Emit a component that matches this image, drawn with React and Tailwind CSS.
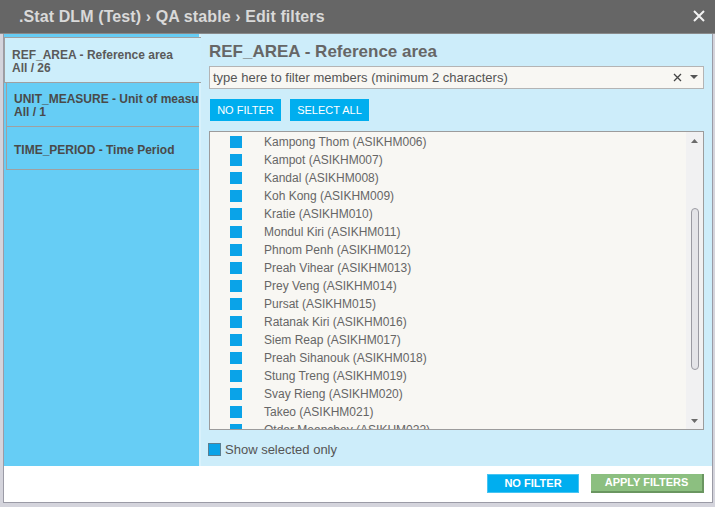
import React from "react";

const items = [
  "Kampong Thom (ASIKHM006)",
  "Kampot (ASIKHM007)",
  "Kandal (ASIKHM008)",
  "Koh Kong (ASIKHM009)",
  "Kratie (ASIKHM010)",
  "Mondul Kiri (ASIKHM011)",
  "Phnom Penh (ASIKHM012)",
  "Preah Vihear (ASIKHM013)",
  "Prey Veng (ASIKHM014)",
  "Pursat (ASIKHM015)",
  "Ratanak Kiri (ASIKHM016)",
  "Siem Reap (ASIKHM017)",
  "Preah Sihanouk (ASIKHM018)",
  "Stung Treng (ASIKHM019)",
  "Svay Rieng (ASIKHM020)",
  "Takeo (ASIKHM021)",
  "Otdar Meanchey (ASIKHM022)",
];

export default function App() {
  return (
    <div
      className="w-[715px] h-[507px] bg-[#d4d4dc] overflow-hidden flex flex-col"
      style={{ fontFamily: '"Liberation Sans", Arial, sans-serif' }}
    >
      {/* Title bar */}
      <div className="h-[34px] bg-[#666666] flex items-center justify-between pl-[19px] pr-[10px] shrink-0 border-b border-[#8a8a8a]">
        <div className="text-[#d9d9d9] font-bold text-[16px] tracking-[0.1px] mt-[1px]">
          .Stat DLM (Test) › QA stable › Edit filters
        </div>
        <svg width="12" height="12" viewBox="0 0 12 12" className="mt-[-2px]">
          <path d="M1 1 L11 11 M11 1 L1 11" stroke="#f2f2f2" strokeWidth="2" />
        </svg>
      </div>

      {/* Window body */}
      <div className="flex-1 flex flex-col ml-[3px] mr-[2px] mb-[4px] border-l border-r border-b border-[#9b9ba6] bg-white">
        <div className="h-[432px] flex">
          {/* Left panel */}
          <div className="w-[195px] bg-[#66cdf5] pt-[3px] flex flex-col shrink-0">
            <div className="h-[46px] bg-[#cdeefb] border-l border-t border-b border-[#a0a0a0] pl-[7px] pt-[3px] flex flex-col justify-center text-[12px] font-bold text-[#5a5a5a] leading-[13px] -mr-[2px] relative z-10">
              <div>REF_AREA - Reference area</div>
              <div>All / 26</div>
            </div>
            <div className="ml-[2px] h-[44px] border-l border-b border-[#a0a0a0] pl-[7px] pt-[3px] flex flex-col justify-center text-[12px] font-bold text-[#4a4a4a] leading-[13px] overflow-hidden whitespace-nowrap">
              <div>UNIT_MEASURE - Unit of measure</div>
              <div>All / 1</div>
            </div>
            <div className="ml-[2px] h-[43px] border-l border-b border-[#a0a0a0] pl-[7px] pt-[3px] flex items-center text-[12px] font-bold text-[#4a4a4a]">
              TIME_PERIOD - Time Period
            </div>
          </div>

          {/* Right panel */}
          <div className="flex-1 bg-[#cdedfa] border-l-2 border-[#d8f1fb] pl-[8px] pr-[8px] pt-[7px] flex flex-col">
            <div className="text-[17px] font-bold text-[#666666] leading-[22px]">
              REF_AREA - Reference area
            </div>
            <div className="mt-[3px] h-[23px] bg-[#f8f7f3] border border-[#b4b4b4] flex items-center pl-[3px] pr-[4px] text-[13px] text-[#555555]">
              <span className="flex-1">type here to filter members (minimum 2 characters)</span>
              <svg width="9" height="9" viewBox="0 0 9 9" className="mr-[8px]">
                <path d="M1 1 L8 8 M8 1 L1 8" stroke="#444" strokeWidth="1.3" />
              </svg>
              <svg width="8" height="5" viewBox="0 0 8 5" className="mr-[1px]">
                <path d="M0 0 L8 0 L4 4 Z" fill="#555" />
              </svg>
            </div>
            <div className="mt-[10px] flex gap-[9px] ml-[1px]">
              <div className="h-[22px] w-[71px] bg-[#00aeef] text-white text-[11px] flex items-center justify-center">
                NO FILTER
              </div>
              <div className="h-[22px] w-[79px] bg-[#00aeef] text-white text-[11px] flex items-center justify-center">
                SELECT ALL
              </div>
            </div>
            <div className="mt-[10px] h-[299px] bg-[#f8f7f3] border border-[#9c9c9c] flex overflow-hidden">
              <div className="flex-1 overflow-hidden pt-[1px]">
                {items.map((t) => (
                  <div key={t} className="h-[18px] flex items-center">
                    <div className="w-[12px] h-[12px] bg-[#0aa3e8] ml-[20px] mr-[22px] shrink-0" />
                    <span className="text-[12px] text-[#666666] whitespace-nowrap">{t}</span>
                  </div>
                ))}
              </div>
              <div className="w-[17px] bg-[#f1f1f2] flex flex-col items-center pt-[7px] pb-[6px]">
                <svg width="7" height="4" viewBox="0 0 7 4">
                  <path d="M0 4 L7 4 L3.5 0 Z" fill="#6b6b6b" />
                </svg>
                <div className="mt-[65px] w-[8px] h-[162px] rounded-[4px] border border-[#9a9aa2] bg-[#e4e4e8]" />
                <div className="flex-1" />
                <svg width="7" height="4" viewBox="0 0 7 4">
                  <path d="M0 0 L7 0 L3.5 4 Z" fill="#6b6b6b" />
                </svg>
              </div>
            </div>
            <div className="mt-[10px] flex items-center -ml-[1px]">
              <div className="w-[13px] h-[13px] bg-[#0aa3e8] border border-[#5a7f92]" />
              <span className="ml-[4px] text-[13px] text-[#555555]">Show selected only</span>
            </div>
          </div>
        </div>

        {/* Footer */}
        <div className="flex-1 bg-white flex items-start justify-end pt-[8px] pr-[8px] gap-[12px]">
          <div className="w-[92px] h-[19px] bg-[#00aeef] border border-[#47c4f2] text-white text-[11px] font-bold flex items-center justify-center">
            NO FILTER
          </div>
          <div className="w-[113px] h-[19px] bg-[#8cbf80] border-r-2 border-b-2 border-[#6a9660] text-white text-[11px] font-bold flex items-center justify-center">
            APPLY FILTERS
          </div>
        </div>
      </div>
    </div>
  );
}
